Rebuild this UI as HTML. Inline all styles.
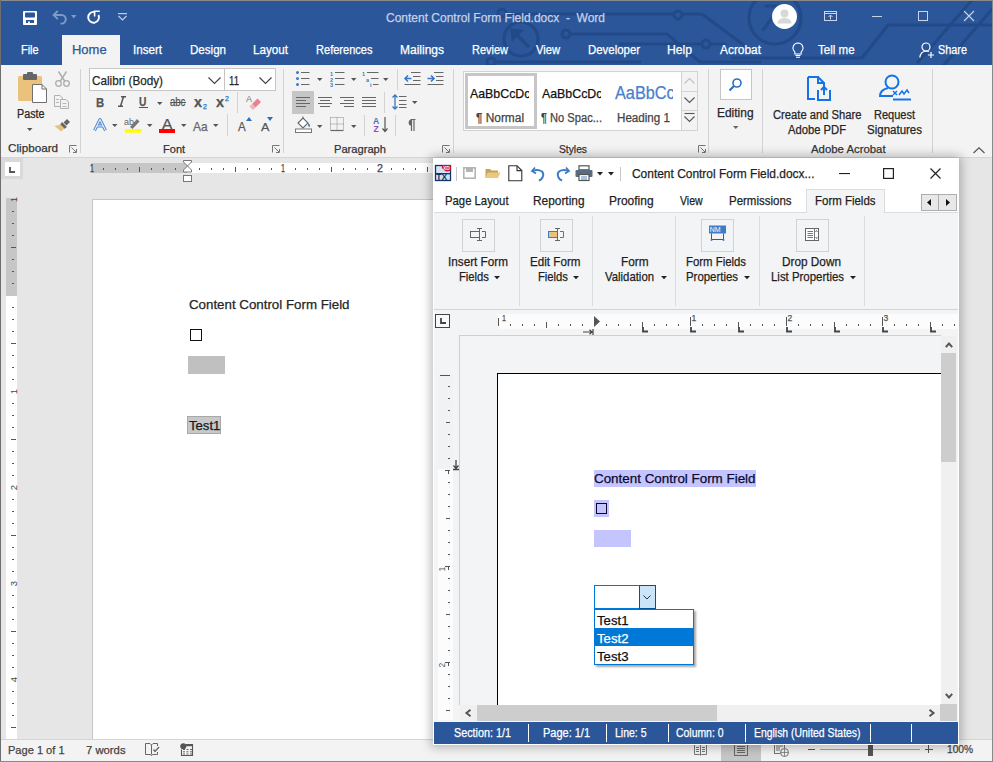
<!DOCTYPE html>
<html><head><meta charset="utf-8">
<style>
*{box-sizing:border-box;margin:0;padding:0}
html,body{width:993px;height:762px;overflow:hidden;background:#e6e6e6;font-family:"Liberation Sans",sans-serif;position:relative}
.a{position:absolute}
.t{position:absolute;white-space:nowrap;line-height:1;transform-origin:0 0;-webkit-text-stroke:0.25px currentColor}
svg.a{overflow:visible}

</style></head><body>
<div class="a" style="left:0px;top:0px;width:993px;height:762px;background:#e6e6e6"></div>
<div class="a" style="left:0px;top:0px;width:993px;height:65px;background:#2b579a"></div>
<svg class="a" style="left:0px;top:0px;clip-path:inset(0 0 0 0)" width="993" height="65" viewBox="0 0 993 65">
<g fill="none" stroke="#224a88" stroke-width="3.2" stroke-linecap="round" stroke-linejoin="round">
<circle cx="521" cy="39" r="17"/>
<path d="M516 34 L528 46" stroke-width="3.5"/></g><g fill="#224a88"><path d="M510 28 L524 30 L512 42Z"/></g><g fill="none" stroke="#224a88" stroke-width="3.2" stroke-linecap="round" stroke-linejoin="round">
<path d="M566 34 H667 L700 62 H760"/>
<path d="M502 14 H702 L745 46"/>
<path d="M620 44 H725"/><path d="M495 62 H640"/>
<circle cx="775" cy="18" r="26"/>
<path d="M763 30 L778 10 M766 6 H778 V18" stroke-width="3"/>
<path d="M732 58 H862 L888 25 H993"/>
<path d="M972 0 L918 62"/>
<path d="M993 8 L943 66"/>
</g>
<g fill="#2b579a" stroke="#224a88" stroke-width="3">
<circle cx="566" cy="34" r="4"/><circle cx="502" cy="13" r="4"/><circle cx="491" cy="62" r="4"/><circle cx="678" cy="15" r="4"/><circle cx="706" cy="44" r="4"/>
</g>
</svg>
<div class="a" style="left:0px;top:0px;width:993px;height:1px;background:#8a8a8a"></div>
<div class="a" style="left:0px;top:0px;width:1px;height:762px;background:#6e6e6e"></div>
<div class="a" style="left:992px;top:0px;width:1px;height:762px;background:#8a8a8a"></div>
<div class="a" style="left:0px;top:761px;width:993px;height:1px;background:#8a8a8a"></div>
<svg class="a" style="left:23px;top:11px;" width="14" height="14" viewBox="0 0 14 14"><rect x="0" y="0" width="14" height="14" rx="0.8" fill="#fff"/><rect x="2" y="1.5" width="10" height="5" rx="0.8" fill="#2b579a"/><rect x="3" y="9" width="8" height="3" fill="#2b579a"/><rect x="5" y="10.5" width="2" height="1.5" fill="#fff"/></svg>
<svg class="a" style="left:52px;top:10px;" width="15" height="15" viewBox="0 0 15 15"><path d="M1.5 5 H9.5 A4.3 4.3 0 0 1 9.5 13.6 H8.5" fill="none" stroke="#7f9cc6" stroke-width="1.9"/><path d="M5.8 0.8 L1.6 5 L5.8 9.2" fill="none" stroke="#7f9cc6" stroke-width="1.9"/></svg>
<svg class="a" style="left:71px;top:15px;" width="6" height="4" viewBox="0 0 6 4"><path d="M0 0 H5.5 L2.75 3.5Z" fill="#7f9cc6"/></svg>
<svg class="a" style="left:86px;top:10px;" width="15" height="15" viewBox="0 0 15 15"><path d="M8.54 1.98 A5.4 5.4 0 1 0 12.49 5.02" fill="none" stroke="#fff" stroke-width="1.9"/><path d="M8.6 6.5 V1.3 H13.8" fill="none" stroke="#fff" stroke-width="1.6"/></svg>
<svg class="a" style="left:118px;top:13px;" width="9" height="8" viewBox="0 0 9 8"><path d="M0 0.6 H9" stroke="#c0cde2" stroke-width="1.2"/><path d="M0.5 3 L4.5 7 L8.5 3" fill="none" stroke="#c0cde2" stroke-width="1.2"/></svg>
<div id="t7f2c9f3855" class="t" style="left:385.50px;top:11.15px;font-size:13px;color:#c6d2e8;transform:scaleX(0.9223);">Content Control Form Field.docx&nbsp; -&nbsp; Word</div>
<svg class="a" style="left:772px;top:4px;" width="25" height="25" viewBox="0 0 25 25"><circle cx="12.5" cy="12.5" r="12.5" fill="#fff"/><circle cx="12.5" cy="9.5" r="4" fill="#d8d8d8"/><path d="M5.5 19.5 Q6 14 12.5 14 Q19 14 19.5 19.5Z" fill="#d8d8d8"/></svg>
<svg class="a" style="left:824px;top:11px;" width="13" height="10" viewBox="0 0 13 10"><rect x="0.5" y="0.5" width="12" height="9" fill="none" stroke="#c8d4ea" stroke-width="1"/><path d="M0.5 2.5 H12.5" stroke="#c8d4ea"/><path d="M6.5 8.5 V4 M4.5 6 L6.5 4 L8.5 6" fill="none" stroke="#c8d4ea"/></svg>
<svg class="a" style="left:872px;top:16px;" width="10" height="1" viewBox="0 0 10 1"><rect x="0" y="0" width="10" height="1" fill="#c8d4ea"/></svg>
<svg class="a" style="left:918px;top:11px;" width="10" height="10" viewBox="0 0 10 10"><rect x="0.5" y="0.5" width="9" height="9" fill="none" stroke="#c8d4ea"/></svg>
<svg class="a" style="left:964px;top:11px;" width="10" height="10" viewBox="0 0 10 10"><path d="M0 0 L10 10 M10 0 L0 10" stroke="#c8d4ea" stroke-width="1.1"/></svg>
<div class="a" style="left:62px;top:35px;width:58px;height:30px;background:#f3f3f3"></div>
<div id="tbbc15a213" class="t" style="left:21.46px;top:43.84px;font-size:12.3px;color:#ffffff;transform:scaleX(0.8895);">File</div>
<div id="t8aadae1340" class="t" style="left:133.20px;top:43.84px;font-size:12.3px;color:#ffffff;transform:scaleX(0.9460);">Insert</div>
<div id="t11355f1898" class="t" style="left:189.96px;top:43.84px;font-size:12.3px;color:#ffffff;transform:scaleX(0.9420);">Design</div>
<div id="te29b2f2530" class="t" style="left:253.00px;top:43.84px;font-size:12.3px;color:#ffffff;transform:scaleX(0.9496);">Layout</div>
<div id="t22053e3162" class="t" style="left:316.04px;top:43.84px;font-size:12.3px;color:#ffffff;transform:scaleX(0.8989);">References</div>
<div id="tc004a34000" class="t" style="left:400.00px;top:43.84px;font-size:12.3px;color:#ffffff;transform:scaleX(0.9763);">Mailings</div>
<div id="tdc41694720" class="t" style="left:472.00px;top:43.84px;font-size:12.3px;color:#ffffff;transform:scaleX(0.8945);">Review</div>
<div id="ta64dcd5360" class="t" style="left:536.00px;top:43.84px;font-size:12.3px;color:#ffffff;transform:scaleX(0.9093);">View</div>
<div id="tc43ec65880" class="t" style="left:588.00px;top:43.84px;font-size:12.3px;color:#ffffff;transform:scaleX(0.9285);">Developer</div>
<div id="t62c74b6680" class="t" style="left:667.20px;top:43.84px;font-size:12.3px;color:#ffffff;transform:scaleX(0.9902);">Help</div>
<div id="t0386777200" class="t" style="left:720.00px;top:43.84px;font-size:12.3px;color:#ffffff;transform:scaleX(0.9682);">Acrobat</div>
<div id="t0ba36f8175" class="t" style="left:817.50px;top:43.84px;font-size:12.3px;color:#ffffff;transform:scaleX(0.9383);">Tell me</div>
<div id="t4261a99384" class="t" style="left:938.08px;top:43.84px;font-size:12.3px;color:#ffffff;transform:scaleX(0.8852);">Share</div>
<div id="t6b4dc1738" class="t" style="left:72.36px;top:43.84px;font-size:12.3px;color:#2b579a;transform:scaleX(1.0545);">Home</div>
<svg class="a" style="left:792px;top:42px;" width="12" height="16" viewBox="0 0 12 16"><path d="M6 1 A5 5 0 0 1 9.2 9.8 V12 H2.8 V9.8 A5 5 0 0 1 6 1Z" fill="none" stroke="#fff" stroke-width="1.1"/><path d="M3.5 13.5 H8.5 M4 15.3 H8" stroke="#fff" stroke-width="1.1"/></svg>
<svg class="a" style="left:919px;top:42px;" width="16" height="16" viewBox="0 0 16 16"><circle cx="7" cy="5" r="4" fill="none" stroke="#fff" stroke-width="1.2"/><path d="M0.8 15.5 Q1.5 9.5 7 9 Q9 9 10 9.6" fill="none" stroke="#fff" stroke-width="1.2"/><path d="M12 10 V16 M9 13 H15" stroke="#fff" stroke-width="1.2"/></svg>
<div class="a" style="left:1px;top:65px;width:991px;height:92px;background:#f3f3f3"></div>
<div class="a" style="left:1px;top:157px;width:991px;height:1px;background:#d5d5d5"></div>
<div class="a" style="left:80px;top:69px;width:1px;height:84px;background:#d2d2d2"></div>
<div class="a" style="left:283px;top:69px;width:1px;height:84px;background:#d2d2d2"></div>
<div class="a" style="left:453px;top:69px;width:1px;height:84px;background:#d2d2d2"></div>
<div class="a" style="left:708px;top:69px;width:1px;height:84px;background:#d2d2d2"></div>
<div class="a" style="left:762px;top:69px;width:1px;height:84px;background:#d2d2d2"></div>
<div class="a" style="left:932px;top:69px;width:1px;height:84px;background:#d2d2d2"></div>
<div id="t0d511577" class="t" style="left:7.54px;top:141.64px;font-size:11.6px;color:#333;transform:scaleX(1.0083);">Clipboard</div>
<div id="t20636a1625" class="t" style="left:162.50px;top:142.84px;font-size:11.6px;color:#333;transform:scaleX(0.9520);">Font</div>
<div id="ta837973343" class="t" style="left:334.46px;top:143.04px;font-size:11.6px;color:#333;transform:scaleX(0.9606);">Paragraph</div>
<div id="tdd20915588" class="t" style="left:558.96px;top:143.34px;font-size:11.6px;color:#333;transform:scaleX(0.8867);">Styles</div>
<div id="tc38e408092" class="t" style="left:810.64px;top:143.14px;font-size:11.6px;color:#333;transform:scaleX(0.9802);">Adobe Acrobat</div>
<svg class="a" style="left:69px;top:145px;" width="8" height="8" viewBox="0 0 8 8"><path d="M0.5 7.5 V0.5 H7.5" fill="none" stroke="#777" stroke-width="1"/><path d="M2.5 2.5 L7 7 M4 7.5 H7.5 V4" fill="none" stroke="#777" stroke-width="1"/></svg>
<svg class="a" style="left:272px;top:145px;" width="8" height="8" viewBox="0 0 8 8"><path d="M0.5 7.5 V0.5 H7.5" fill="none" stroke="#777" stroke-width="1"/><path d="M2.5 2.5 L7 7 M4 7.5 H7.5 V4" fill="none" stroke="#777" stroke-width="1"/></svg>
<svg class="a" style="left:442px;top:145px;" width="8" height="8" viewBox="0 0 8 8"><path d="M0.5 7.5 V0.5 H7.5" fill="none" stroke="#777" stroke-width="1"/><path d="M2.5 2.5 L7 7 M4 7.5 H7.5 V4" fill="none" stroke="#777" stroke-width="1"/></svg>
<svg class="a" style="left:698px;top:145px;" width="8" height="8" viewBox="0 0 8 8"><path d="M0.5 7.5 V0.5 H7.5" fill="none" stroke="#777" stroke-width="1"/><path d="M2.5 2.5 L7 7 M4 7.5 H7.5 V4" fill="none" stroke="#777" stroke-width="1"/></svg>
<svg class="a" style="left:17px;top:72px;" width="31" height="32" viewBox="0 0 31 32">
<rect x="1" y="4" width="24" height="25" rx="1.5" fill="#eac27c"/>
<rect x="6" y="2" width="14" height="6" rx="1" fill="#666"/>
<rect x="10" y="0" width="6" height="4" rx="1" fill="#666"/>
<path d="M15.5 12.5 H25 L29.5 17 V30.5 H15.5Z" fill="#fff" stroke="#707070" stroke-width="1"/>
<path d="M25 12.5 V17 H29.5" fill="none" stroke="#707070" stroke-width="1"/>
</svg>
<div id="te72ed9166" class="t" style="left:16.92px;top:107.60px;font-size:12px;color:#262626;transform:scaleX(0.8978);">Paste</div>
<svg class="a" style="left:27px;top:128px;" width="6" height="3" viewBox="0 0 6 3"><path d="M0 0 H5.5 L2.75 3Z" fill="#555"/></svg>
<svg class="a" style="left:55px;top:71px;" width="15" height="16" viewBox="0 0 15 16"><path d="M3.5 0.5 L10 10.5 M11.5 0.5 L5 10.5" stroke="#adadad" stroke-width="1.4" fill="none"/><circle cx="3.5" cy="12.5" r="2.8" fill="none" stroke="#adadad" stroke-width="1.3"/><circle cx="11.5" cy="12.5" r="2.8" fill="none" stroke="#adadad" stroke-width="1.3"/></svg>
<svg class="a" style="left:54px;top:95px;" width="16" height="14" viewBox="0 0 16 14"><path d="M0.5 0.5 H6 L8.5 3 V11.5 H0.5Z" fill="#f3f3f3" stroke="#b0b0b0"/><path d="M6.5 4.5 H12 L14.5 7 V13.5 H6.5Z" fill="#f3f3f3" stroke="#b0b0b0"/><path d="M2 4.5 H5 M2 7.5 H5 M8.5 8.5 H12.5 M8.5 11.5 H12.5" stroke="#b8b8b8"/></svg>
<svg class="a" style="left:54px;top:118px;" width="17" height="14" viewBox="0 0 17 14"><path d="M9.5 4.5 L13 1 L16 4 L12.5 7.5Z" fill="#666"/><path d="M8 4 L13 9 L10 11 L6 7Z" fill="#666"/><path d="M6.5 6.5 L10.5 10.5 L7 13.5 L0.5 8 Z" fill="#eac27c"/></svg>
<div class="a" style="left:89px;top:68px;width:136px;height:23px;background:#fff;border:1px solid #c6c6c6"></div>
<div class="a" style="left:224px;top:68px;width:52px;height:23px;background:#fff;border:1px solid #c6c6c6"></div>
<div id="t584dda923" class="t" style="left:92.46px;top:73.55px;font-size:13px;color:#262626;transform:scaleX(0.9018);">Calibri (Body)</div>
<div id="tdb12542286" class="t" style="left:228.92px;top:73.55px;font-size:13px;color:#262626;transform:scaleX(0.7407);">11</div>
<svg class="a" style="left:208px;top:77px;" width="13" height="7" viewBox="0 0 13 7"><path d="M0.5 0.5 L6.5 6.5 L12.5 0.5" fill="none" stroke="#444" stroke-width="1.2"/></svg>
<svg class="a" style="left:259px;top:77px;" width="13" height="7" viewBox="0 0 13 7"><path d="M0.5 0.5 L6.5 6.5 L12.5 0.5" fill="none" stroke="#444" stroke-width="1.2"/></svg>
<div id="td25938955" class="t" style="left:95.50px;top:95.83px;font-size:13.5px;color:#555555;transform:scaleX(0.8378);font-weight:bold">B</div>
<svg class="a" style="left:118px;top:96px;" width="8" height="11" viewBox="0 0 8 11"><path d="M3 0.8 H8 M0 10.2 H5 M5.5 0.8 L2.5 10.2" fill="none" stroke="#555" stroke-width="1.5"/></svg>
<div id="t57b72a1388" class="t" style="left:138.96px;top:94.95px;font-size:13px;color:#555555;transform:scaleX(0.7860);font-weight:bold">U</div>
<div class="a" style="left:138.8px;top:107px;width:9px;height:1.3px;background:#555555"></div>
<svg class="a" style="left:157px;top:102px;" width="6" height="3" viewBox="0 0 6 3"><path d="M0 0 H5.5 L2.75 3Z" fill="#555"/></svg>
<div id="t6082021700" class="t" style="left:170.00px;top:96.30px;font-size:12px;color:#555555;transform:scaleX(0.7926);">abc</div>
<div class="a" style="left:170px;top:101.5px;width:16px;height:1.2px;background:#555555"></div>
<div id="t365f9b1940" class="t" style="left:194.00px;top:94.67px;font-size:14.5px;color:#555555;transform:scaleX(1.0000);font-weight:bold">x</div>
<div id="t5bd4202030" class="t" style="left:203.00px;top:103.05px;font-size:7px;color:#2b6fc0;">2</div>
<div id="t365f9b2160" class="t" style="left:216.00px;top:94.67px;font-size:14.5px;color:#555555;transform:scaleX(1.0000);font-weight:bold">x</div>
<div id="t5bd4202250" class="t" style="left:225.00px;top:95.25px;font-size:7px;color:#2b6fc0;">2</div>
<div class="a" style="left:237px;top:92px;width:1px;height:21px;background:#d2d2d2"></div>
<svg class="a" style="left:246px;top:94px;" width="16" height="16" viewBox="0 0 16 16"><text x="0" y="8" font-size="9" fill="#777" font-family="Liberation Sans">A</text><path d="M6 10 L11.5 4.5 L15 8 L9.5 13.5 Z" fill="#e9818f"/><path d="M3.5 12.5 L6 10 L9.5 13.5 L7 16 Z" fill="#f3b0b8"/></svg>
<svg class="a" style="left:93px;top:118px;" width="14" height="14" viewBox="0 0 14 14"><path d="M1.5 12.5 L7 1.5 L12.5 12.5 M4 8 H10" fill="none" stroke="#4a86d0" stroke-width="3" stroke-linejoin="round"/><path d="M1.5 12.5 L7 1.5 L12.5 12.5 M4 8 H10" fill="none" stroke="#eef4fb" stroke-width="1.1" stroke-linejoin="round"/></svg>
<svg class="a" style="left:111.5px;top:124px;" width="6" height="3" viewBox="0 0 6 3"><path d="M0 0 H5.5 L2.75 3Z" fill="#555"/></svg>
<svg class="a" style="left:124px;top:117px;" width="18" height="16" viewBox="0 0 18 16"><text x="0" y="8" font-size="9" fill="#666" font-family="Liberation Sans">ab</text><path d="M6 10 L13 2 L15.5 4.5 L8.5 12Z" fill="#777"/><rect x="0.8" y="12" width="16.5" height="3.7" fill="#ffff00"/></svg>
<svg class="a" style="left:147px;top:124px;" width="6" height="3" viewBox="0 0 6 3"><path d="M0 0 H5.5 L2.75 3Z" fill="#555"/></svg>
<div id="t9d4f6b1595" class="t" style="left:161.90px;top:116.60px;font-size:14px;color:#555;transform:scaleX(1.1095);">A</div>
<div class="a" style="left:159px;top:129px;width:16px;height:3.7px;background:#ff0000"></div>
<svg class="a" style="left:181px;top:124px;" width="6" height="3" viewBox="0 0 6 3"><path d="M0 0 H5.5 L2.75 3Z" fill="#555"/></svg>
<div id="ta1ca191930" class="t" style="left:193.00px;top:119.53px;font-size:13.5px;color:#666;transform:scaleX(0.8852);">Aa</div>
<svg class="a" style="left:213px;top:124px;" width="6" height="3" viewBox="0 0 6 3"><path d="M0 0 H5.5 L2.75 3Z" fill="#555"/></svg>
<div class="a" style="left:227px;top:114px;width:1px;height:22px;background:#d2d2d2"></div>
<div id="t3366852380" class="t" style="left:238.00px;top:119.72px;font-size:13.5px;color:#555;transform:scaleX(0.8532);">A</div>
<svg class="a" style="left:246px;top:117px;" width="6" height="4" viewBox="0 0 6 4"><path d="M0 4 L3 0 L6 4Z" fill="#2b6fc0"/></svg>
<div id="ta53d912608" class="t" style="left:260.96px;top:122.42px;font-size:11.5px;color:#555;transform:scaleX(1.0995);">A</div>
<svg class="a" style="left:267px;top:117px;" width="6" height="4" viewBox="0 0 6 4"><path d="M0 0 L3 4 L6 0Z" fill="#2b6fc0"/></svg>
<svg class="a" style="left:296px;top:71px;" width="14" height="15" viewBox="0 0 14 15"><circle cx="1.5" cy="1.5" r="1.5" fill="#3b78c2"/><circle cx="1.5" cy="7.5" r="1.5" fill="#3b78c2"/><circle cx="1.5" cy="13.5" r="1.5" fill="#3b78c2"/><path d="M5 1.5 H13.5 M5 7.5 H13.5 M5 13.5 H13.5" stroke="#666" stroke-width="1"/></svg>
<svg class="a" style="left:317px;top:78px;" width="6" height="3" viewBox="0 0 6 3"><path d="M0 0 H5.5 L2.75 3Z" fill="#555"/></svg>
<svg class="a" style="left:330px;top:71px;" width="15" height="15" viewBox="0 0 15 15"><text x="0" y="4.5" font-size="5.5" font-weight="bold" fill="#3b78c2" font-family="Liberation Sans">1</text><text x="0" y="10.5" font-size="5.5" font-weight="bold" fill="#3b78c2" font-family="Liberation Sans">2</text><text x="0" y="16" font-size="5.5" font-weight="bold" fill="#3b78c2" font-family="Liberation Sans">3</text><path d="M5 1.5 H14.5 M5 7.5 H14.5 M5 13.5 H14.5" stroke="#666" stroke-width="1"/></svg>
<svg class="a" style="left:351px;top:78px;" width="6" height="3" viewBox="0 0 6 3"><path d="M0 0 H5.5 L2.75 3Z" fill="#555"/></svg>
<svg class="a" style="left:362px;top:71px;" width="17" height="15" viewBox="0 0 17 15"><text x="0" y="4.5" font-size="5.5" font-weight="bold" fill="#3b78c2" font-family="Liberation Sans">1</text><text x="4" y="10.5" font-size="5.5" font-weight="bold" fill="#3b78c2" font-family="Liberation Sans">a</text><text x="8" y="16" font-size="5.5" font-weight="bold" fill="#3b78c2" font-family="Liberation Sans">i</text><path d="M5 1.5 H16.5 M9 7.5 H16.5 M11 13.5 H16.5" stroke="#666" stroke-width="1"/></svg>
<svg class="a" style="left:383px;top:78px;" width="6" height="3" viewBox="0 0 6 3"><path d="M0 0 H5.5 L2.75 3Z" fill="#555"/></svg>
<div class="a" style="left:397px;top:69px;width:1px;height:21px;background:#d2d2d2"></div>
<svg class="a" style="left:404px;top:72px;" width="17" height="14" viewBox="0 0 17 14"><path d="M7 0.5 H16.5 M9 4.5 H16.5 M9 8.5 H16.5 M0.5 12.5 H16.5" stroke="#666" stroke-width="1"/><path d="M1 6.5 H7.5 M4 3.5 L1 6.5 L4 9.5" fill="none" stroke="#3b78c2" stroke-width="1.6"/></svg>
<svg class="a" style="left:427px;top:72px;" width="17" height="14" viewBox="0 0 17 14"><path d="M7 0.5 H16.5 M9 4.5 H16.5 M9 8.5 H16.5 M0.5 12.5 H16.5" stroke="#666" stroke-width="1"/><path d="M0.5 6.5 H7 M4 3.5 L7 6.5 L4 9.5" fill="none" stroke="#3b78c2" stroke-width="1.6"/></svg>
<div class="a" style="left:292px;top:91px;width:22px;height:23px;background:#c6c6c6"></div>
<svg class="a" style="left:296px;top:97px;" width="15" height="11" viewBox="0 0 15 11"><path d="M0 0.5 H14" stroke="#666" stroke-width="1"/><path d="M0 3.5 H10" stroke="#666" stroke-width="1"/><path d="M0 6.5 H14" stroke="#666" stroke-width="1"/><path d="M0 9.5 H10" stroke="#666" stroke-width="1"/></svg>
<svg class="a" style="left:318px;top:97px;" width="15" height="11" viewBox="0 0 15 11"><path d="M0 0.5 H14" stroke="#666" stroke-width="1"/><path d="M2 3.5 H12" stroke="#666" stroke-width="1"/><path d="M0 6.5 H14" stroke="#666" stroke-width="1"/><path d="M2 9.5 H12" stroke="#666" stroke-width="1"/></svg>
<svg class="a" style="left:340px;top:97px;" width="15" height="11" viewBox="0 0 15 11"><path d="M0 0.5 H14" stroke="#666" stroke-width="1"/><path d="M4 3.5 H14" stroke="#666" stroke-width="1"/><path d="M0 6.5 H14" stroke="#666" stroke-width="1"/><path d="M4 9.5 H14" stroke="#666" stroke-width="1"/></svg>
<svg class="a" style="left:362px;top:97px;" width="15" height="11" viewBox="0 0 15 11"><path d="M0 0.5 H14" stroke="#666" stroke-width="1"/><path d="M0 3.5 H14" stroke="#666" stroke-width="1"/><path d="M0 6.5 H14" stroke="#666" stroke-width="1"/><path d="M0 9.5 H14" stroke="#666" stroke-width="1"/></svg>
<div class="a" style="left:384px;top:92px;width:1px;height:21px;background:#d2d2d2"></div>
<svg class="a" style="left:392px;top:94px;" width="15" height="16" viewBox="0 0 15 16"><path d="M7 2.5 H14.5 M7 6.5 H14.5 M7 10.5 H14.5 M7 13.5 H14.5" stroke="#666" stroke-width="1"/><path d="M3 1 V15 M0.5 3.5 L3 1 L5.5 3.5 M0.5 12.5 L3 15 L5.5 12.5" fill="none" stroke="#3b78c2" stroke-width="1.3"/></svg>
<svg class="a" style="left:412px;top:101px;" width="6" height="3" viewBox="0 0 6 3"><path d="M0 0 H5.5 L2.75 3Z" fill="#555"/></svg>
<svg class="a" style="left:295px;top:116px;" width="17" height="17" viewBox="0 0 17 17"><path d="M3 7 L8 2 L13 7 L8 12Z" fill="#fff" stroke="#666" stroke-width="1.1"/><path d="M8 2 V0.5" stroke="#666"/><path d="M13 7 Q16 9 14.5 11 Q12.5 10 13 7Z" fill="#3b78c2"/><rect x="0.5" y="13" width="16" height="3.5" fill="#fff" stroke="#777" stroke-width="1"/></svg>
<svg class="a" style="left:317px;top:125px;" width="6" height="3" viewBox="0 0 6 3"><path d="M0 0 H5.5 L2.75 3Z" fill="#555"/></svg>
<svg class="a" style="left:330px;top:117px;" width="14" height="14" viewBox="0 0 14 14"><path d="M0.5 13.5 H13.5" stroke="#666" stroke-width="1.2"/><path d="M0.5 0.5 H13.5 V13 M0.5 0.5 V13 M7 0.5 V13 M0.5 7 H13.5" stroke="#888" stroke-width="1" stroke-dasharray="1 1" fill="none"/></svg>
<svg class="a" style="left:351px;top:125px;" width="6" height="3" viewBox="0 0 6 3"><path d="M0 0 H5.5 L2.75 3Z" fill="#555"/></svg>
<div class="a" style="left:364px;top:115px;width:1px;height:21px;background:#d2d2d2"></div>
<svg class="a" style="left:373px;top:116px;" width="15" height="17" viewBox="0 0 15 17"><text x="0" y="7.5" font-size="8.5" fill="#3b78c2" font-family="Liberation Sans" font-weight="bold">A</text><text x="0.5" y="16" font-size="8.5" fill="#8a4fc4" font-family="Liberation Sans" font-weight="bold">Z</text><path d="M12 1 V15 M9.5 12.5 L12 15.5 L14.5 12.5" fill="none" stroke="#555" stroke-width="1.2"/></svg>
<div class="a" style="left:395px;top:115px;width:1px;height:21px;background:#d2d2d2"></div>
<svg class="a" style="left:406px;top:119px;" width="10" height="12" viewBox="0 0 10 12"><path d="M4.5 0.5 H9.5 M5.5 0.5 V12 M8 0.5 V12" stroke="#666" stroke-width="1.2" fill="none"/><path d="M5 0.5 A3 3.2 0 0 0 5 6.8Z" fill="#666"/></svg>
<div class="a" style="left:463px;top:71px;width:235px;height:60px;background:#fff;border:1px solid #d2d2d2"></div>
<div class="a" style="left:465px;top:73px;width:72px;height:56px;border:3px solid #c6c6c6"></div>
<div class="a" style="left:681px;top:71px;width:17px;height:60px;background:#f3f3f3;border:1px solid #d2d2d2"></div>
<div class="a" style="left:681px;top:91px;width:17px;height:1px;background:#d2d2d2"></div>
<div class="a" style="left:681px;top:110px;width:17px;height:1px;background:#d2d2d2"></div>
<svg class="a" style="left:684px;top:78px;" width="11" height="6" viewBox="0 0 11 6"><path d="M0.5 5.5 L5.5 0.5 L10.5 5.5" fill="none" stroke="#c0c0c0" stroke-width="1.1"/></svg>
<svg class="a" style="left:684px;top:97px;" width="11" height="6" viewBox="0 0 11 6"><path d="M0.5 0.5 L5.5 5.5 L10.5 0.5" fill="none" stroke="#555" stroke-width="1.1"/></svg>
<svg class="a" style="left:684px;top:113px;" width="11" height="10" viewBox="0 0 11 10"><path d="M0.5 0.5 H10.5" stroke="#555" stroke-width="1.1"/><path d="M0.5 3.5 L5.5 8.5 L10.5 3.5" fill="none" stroke="#555" stroke-width="1.1"/></svg>
<div class="a" style="left:470px;top:80px;width:59px;height:25px;overflow:hidden"><div id="t6f57ef4" class="t" style="left:0.40px;top:7.15px;font-size:13px;color:#111;transform:scaleX(0.95)">AaBbCcDc</div></div>
<div class="a" style="left:542px;top:80px;width:59px;height:25px;overflow:hidden"><div id="t6f57ef4" class="t" style="left:0.40px;top:7.15px;font-size:13px;color:#111;transform:scaleX(0.95)">AaBbCcDc</div></div>
<div class="a" style="left:614px;top:80px;width:59px;height:25px;overflow:hidden"><div id="te061d55" class="t" style="left:0.50px;top:4.93px;font-size:17.5px;color:#4a7fcb;transform:scaleX(0.93)">AaBbCcDc</div></div>
<div id="tcf5f604758" class="t" style="left:475.96px;top:112.00px;font-size:12px;color:#444;transform:scaleX(0.9914);">&para; Normal</div>
<div id="t0522e15410" class="t" style="left:541.00px;top:112.00px;font-size:12px;color:#444;transform:scaleX(0.9269);">&para; No Spac...</div>
<div id="tfbc1f56172" class="t" style="left:617.04px;top:112.00px;font-size:12px;color:#444;transform:scaleX(0.9686);">Heading 1</div>
<div class="a" style="left:720px;top:69px;width:32px;height:31px;background:#fff;border:1px solid #c6c6c6"></div>
<svg class="a" style="left:728px;top:78px;" width="15" height="13" viewBox="0 0 15 13"><circle cx="9" cy="5" r="4" fill="none" stroke="#2b6fc0" stroke-width="1.6"/><path d="M6 8 L1.5 12.5" stroke="#2b6fc0" stroke-width="2.2"/></svg>
<div id="t75d3b07170" class="t" style="left:717.00px;top:106.50px;font-size:12px;color:#262626;transform:scaleX(0.9955);">Editing</div>
<svg class="a" style="left:733px;top:126px;" width="6" height="3" viewBox="0 0 6 3"><path d="M0 0 H5.5 L2.75 3Z" fill="#666"/></svg>
<svg class="a" style="left:807px;top:76px;" width="25" height="26" viewBox="0 0 25 26"><path d="M1 1 H11 L17 7 V11 M1 1 V23 H8" fill="none" stroke="#1473e6" stroke-width="2"/><path d="M11 1 V7 H17" fill="none" stroke="#1473e6" stroke-width="2"/><path d="M11 14 V24 H23 V14" fill="none" stroke="#1473e6" stroke-width="2"/><path d="M17 19 V11 M14 14 L17 11 L20 14" fill="none" stroke="#1473e6" stroke-width="2"/></svg>
<div id="t4fe8137732" class="t" style="left:773.04px;top:108.60px;font-size:12px;color:#262626;transform:scaleX(0.9344);">Create and Share</div>
<div id="t5de8277880" class="t" style="left:788.00px;top:124.20px;font-size:12px;color:#262626;transform:scaleX(0.9353);">Adobe PDF</div>
<svg class="a" style="left:879px;top:74px;" width="33" height="27" viewBox="0 0 33 27"><circle cx="13" cy="8" r="6.5" fill="none" stroke="#1473e6" stroke-width="2"/><path d="M9 14 Q1 16 1 22 H14" fill="none" stroke="#1473e6" stroke-width="2"/><path d="M14 17 L18 21 M18 17 L14 21" stroke="#1473e6" stroke-width="1.4"/><path d="M20 21 L23 17 L25 20 L28 16 L30 19" fill="none" stroke="#1473e6" stroke-width="1.5"/><path d="M14 25.5 H32" stroke="#1473e6" stroke-width="2"/></svg>
<div id="t47f6238740" class="t" style="left:874.00px;top:108.60px;font-size:12px;color:#262626;transform:scaleX(0.9177);">Request</div>
<div id="t2f61e88667" class="t" style="left:866.54px;top:124.20px;font-size:12px;color:#262626;transform:scaleX(0.9590);">Signatures</div>
<svg class="a" style="left:973px;top:147px;" width="12" height="7" viewBox="0 0 12 7"><path d="M0.5 6 L6 0.8 L11.5 6" fill="none" stroke="#555" stroke-width="1.2"/></svg>
<div class="a" style="left:1px;top:158px;width:22px;height:21px;background:#d9d9d9"></div>
<div class="a" style="left:5px;top:162px;width:15px;height:14px;background:#fff"></div>
<svg class="a" style="left:9px;top:167px;" width="6" height="6" viewBox="0 0 6 6"><path d="M1 0 V5 H6" fill="none" stroke="#555" stroke-width="1.8"/></svg>
<div class="a" style="left:91px;top:163px;width:342px;height:10px;background:#fff"></div>
<div class="a" style="left:91px;top:163px;width:96px;height:10px;background:#c6c6c6"></div>
<svg class="a" style="left:91px;top:163px;" width="342" height="10" viewBox="0 0 342 10"><rect x="12" y="5" width="1" height="2" fill="#555"/><rect x="24" y="5" width="1" height="2" fill="#555"/><rect x="36" y="5" width="1" height="2" fill="#555"/><rect x="48" y="4" width="1" height="5" fill="#555"/><rect x="60" y="5" width="1" height="2" fill="#555"/><rect x="72" y="5" width="1" height="2" fill="#555"/><rect x="84" y="5" width="1" height="2" fill="#555"/><rect x="108" y="5" width="1" height="2" fill="#555"/><rect x="120" y="5" width="1" height="2" fill="#555"/><rect x="132" y="5" width="1" height="2" fill="#555"/><rect x="144" y="4" width="1" height="5" fill="#555"/><rect x="156" y="5" width="1" height="2" fill="#555"/><rect x="168" y="5" width="1" height="2" fill="#555"/><rect x="180" y="5" width="1" height="2" fill="#555"/><rect x="204" y="5" width="1" height="2" fill="#555"/><rect x="216" y="5" width="1" height="2" fill="#555"/><rect x="228" y="5" width="1" height="2" fill="#555"/><rect x="240" y="4" width="1" height="5" fill="#555"/><rect x="252" y="5" width="1" height="2" fill="#555"/><rect x="264" y="5" width="1" height="2" fill="#555"/><rect x="276" y="5" width="1" height="2" fill="#555"/><rect x="300" y="5" width="1" height="2" fill="#555"/><rect x="312" y="5" width="1" height="2" fill="#555"/><rect x="324" y="5" width="1" height="2" fill="#555"/><rect x="336" y="4" width="1" height="5" fill="#555"/></svg>
<div id="tc18967898" class="t" style="left:89.80px;top:163.07px;font-size:10.5px;color:#444;transform:scaleX(0.6845);">1</div>
<div id="tc189672805" class="t" style="left:280.50px;top:163.07px;font-size:10.5px;color:#444;transform:scaleX(0.6845);">1</div>
<div id="t21cd0c3765" class="t" style="left:376.50px;top:163.07px;font-size:10.5px;color:#444;transform:scaleX(1.0267);">2</div>
<svg class="a" style="left:183px;top:160px;" width="10" height="22" viewBox="0 0 10 22"><path d="M0.5 0.5 H8.5 V2 L4.5 6 L8.5 10 V12 H0.5 V10 L4.5 6 L0.5 2Z" fill="#fff" stroke="#777" stroke-width="1"/><rect x="0.5" y="15.5" width="8" height="6" fill="#fff" stroke="#777" stroke-width="1"/></svg>
<div class="a" style="left:6px;top:198px;width:11px;height:542px;background:#fff"></div>
<div class="a" style="left:6px;top:198px;width:11px;height:98px;background:#c6c6c6"></div>
<svg class="a" style="left:6px;top:198px;" width="11" height="542" viewBox="0 0 11 542"><rect x="6" y="13" width="2" height="1" fill="#555"/><rect x="6" y="25" width="2" height="1" fill="#555"/><rect x="6" y="37" width="2" height="1" fill="#555"/><rect x="5" y="49" width="5" height="1" fill="#555"/><rect x="6" y="61" width="2" height="1" fill="#555"/><rect x="6" y="73" width="2" height="1" fill="#555"/><rect x="6" y="85" width="2" height="1" fill="#555"/><rect x="6" y="109" width="2" height="1" fill="#555"/><rect x="6" y="121" width="2" height="1" fill="#555"/><rect x="6" y="133" width="2" height="1" fill="#555"/><rect x="5" y="145" width="5" height="1" fill="#555"/><rect x="6" y="157" width="2" height="1" fill="#555"/><rect x="6" y="169" width="2" height="1" fill="#555"/><rect x="6" y="181" width="2" height="1" fill="#555"/><rect x="6" y="205" width="2" height="1" fill="#555"/><rect x="6" y="217" width="2" height="1" fill="#555"/><rect x="6" y="229" width="2" height="1" fill="#555"/><rect x="5" y="241" width="5" height="1" fill="#555"/><rect x="6" y="253" width="2" height="1" fill="#555"/><rect x="6" y="265" width="2" height="1" fill="#555"/><rect x="6" y="277" width="2" height="1" fill="#555"/><rect x="6" y="301" width="2" height="1" fill="#555"/><rect x="6" y="313" width="2" height="1" fill="#555"/><rect x="6" y="325" width="2" height="1" fill="#555"/><rect x="5" y="337" width="5" height="1" fill="#555"/><rect x="6" y="349" width="2" height="1" fill="#555"/><rect x="6" y="361" width="2" height="1" fill="#555"/><rect x="6" y="373" width="2" height="1" fill="#555"/><rect x="6" y="397" width="2" height="1" fill="#555"/><rect x="6" y="409" width="2" height="1" fill="#555"/><rect x="6" y="421" width="2" height="1" fill="#555"/><rect x="5" y="433" width="5" height="1" fill="#555"/><rect x="6" y="445" width="2" height="1" fill="#555"/><rect x="6" y="457" width="2" height="1" fill="#555"/><rect x="6" y="469" width="2" height="1" fill="#555"/><rect x="6" y="493" width="2" height="1" fill="#555"/><rect x="6" y="505" width="2" height="1" fill="#555"/><rect x="6" y="517" width="2" height="1" fill="#555"/><rect x="5" y="529" width="5" height="1" fill="#555"/></svg>
<div class="a" style="left:7.5px;top:193.5px;width:11px;height:11px;font-size:9.5px;line-height:11px;text-align:center;color:#444;transform:rotate(-90deg)">1</div>
<div class="a" style="left:7.5px;top:385.5px;width:11px;height:11px;font-size:9.5px;line-height:11px;text-align:center;color:#444;transform:rotate(-90deg)">1</div>
<div class="a" style="left:7.5px;top:481.5px;width:11px;height:11px;font-size:9.5px;line-height:11px;text-align:center;color:#444;transform:rotate(-90deg)">2</div>
<div class="a" style="left:7.5px;top:577.5px;width:11px;height:11px;font-size:9.5px;line-height:11px;text-align:center;color:#444;transform:rotate(-90deg)">3</div>
<div class="a" style="left:7.5px;top:673.5px;width:11px;height:11px;font-size:9.5px;line-height:11px;text-align:center;color:#444;transform:rotate(-90deg)">4</div>
<div class="a" style="left:92px;top:199px;width:341px;height:541px;background:#fff;border-left:1px solid #c6c6c6;border-top:1px solid #c6c6c6"></div>
<div id="t06d3261887" class="t" style="left:188.54px;top:298.25px;font-size:13px;color:#262626;transform:scaleX(1.0238);">Content Control Form Field</div>
<div class="a" style="left:190px;top:329px;width:11.5px;height:11.5px;border:1.3px solid #111"></div>
<div class="a" style="left:188px;top:356px;width:37px;height:18px;background:#c0c0c0"></div>
<div class="a" style="left:187px;top:416px;width:34px;height:18px;background:#c8c8c8;border:1px solid #a8a8a8"></div>
<div id="t5685a31887" class="t" style="left:188.70px;top:419.05px;font-size:13px;color:#1a1a1a;transform:scaleX(1.0104);">Test1</div>
<div class="a" style="left:1px;top:739px;width:991px;height:22px;background:#f3f3f3;border-top:1px solid #d5d5d5"></div>
<div id="t48fd8380" class="t" style="left:8.00px;top:745.23px;font-size:11.5px;color:#444;transform:scaleX(0.9610);">Page 1 of 1</div>
<div id="t299a35856" class="t" style="left:85.92px;top:745.23px;font-size:11.5px;color:#444;transform:scaleX(0.9815);">7 words</div>
<svg class="a" style="left:145px;top:743px;" width="15" height="14" viewBox="0 0 15 14"><path d="M0.5 0.5 H5 L6.5 2 V11.5 M0.5 0.5 V11.5 H5.5 L6.5 12.8 L7.5 11.5 H12.5 V9" fill="none" stroke="#666" stroke-width="1"/><path d="M6.5 2 L8 0.5 H12.5 V3" fill="none" stroke="#666" stroke-width="1"/><path d="M8.5 6.5 L10 8.5 L14 4" fill="none" stroke="#666" stroke-width="1.3"/></svg>
<svg class="a" style="left:180px;top:743px;" width="14" height="14" viewBox="0 0 14 14"><path d="M1.5 6.5 V12.5 H12.5 V1.5 H6" fill="none" stroke="#555" stroke-width="1.1"/><rect x="6" y="1" width="7" height="2.2" fill="#555"/><path d="M3 6.5 H5 M6.5 6.5 H8.5 M10 6.5 H12 M3 8.8 H5 M6.5 8.8 H8.5 M10 8.8 H12 M3 11 H5 M6.5 11 H8.5 M10 11 H12" stroke="#666" stroke-width="1"/><circle cx="3.3" cy="3.3" r="3" fill="#555"/></svg>
<svg class="a" style="left:694px;top:744px;" width="13" height="12" viewBox="0 0 13 12"><path d="M0.5 0.5 H5.5 L6.5 1.5 L7.5 0.5 H12.5 V10.5 H7.5 L6.5 11.5 L5.5 10.5 H0.5Z" fill="none" stroke="#777"/><path d="M6.5 1.5 V11 M2 3.5 H5 M2 5.5 H5 M2 7.5 H5 M8 3.5 H11 M8 5.5 H11 M8 7.5 H11" stroke="#777"/></svg>
<div class="a" style="left:721px;top:744px;width:40px;height:17px;background:#c6c6c6"></div>
<svg class="a" style="left:734px;top:743px;" width="14" height="13" viewBox="0 0 14 13"><rect x="0.5" y="0.5" width="13" height="12" fill="none" stroke="#666"/><path d="M3 3.5 H11 M3 5.5 H11 M3 7.5 H11 M3 9.5 H11" stroke="#666"/></svg>
<svg class="a" style="left:774px;top:743px;" width="15" height="14" viewBox="0 0 15 14"><rect x="0.5" y="0.5" width="10" height="10" fill="none" stroke="#777"/><path d="M2 3 H9 M2 5 H6 M2 7 H6" stroke="#777"/><circle cx="10.5" cy="9.5" r="4" fill="#f3f3f3" stroke="#777"/><path d="M6.5 9.5 H14.5 M10.5 5.5 V13.5" stroke="#777" stroke-width="0.8"/></svg>
<div class="a" style="left:808px;top:749px;width:7px;height:1.2px;background:#555"></div>
<div class="a" style="left:820px;top:749px;width:100px;height:1px;background:#a0a0a0"></div>
<div class="a" style="left:868px;top:743px;width:5px;height:13px;background:#555"></div>
<div class="a" style="left:924.5px;top:749px;width:8px;height:1.2px;background:#555"></div>
<div class="a" style="left:928px;top:745px;width:1.2px;height:8px;background:#555"></div>
<div id="t95b9be9466" class="t" style="left:946.60px;top:744.23px;font-size:11.5px;color:#444;transform:scaleX(0.8886);">100%</div>
<div class="a" style="left:433px;top:158px;width:526px;height:587px;background:#fff;box-shadow:0 0 10px 2px rgba(0,0,0,0.28)"></div>
<svg class="a" style="left:435px;top:165px;" width="16" height="16" viewBox="0 0 16 16"><rect x="0.5" y="0.5" width="15" height="15" fill="#d6e2ee" stroke="#0e3570" stroke-width="1.3"/><rect x="1" y="8" width="14" height="1.3" fill="#0e3570"/><text x="1.2" y="15" font-size="8.5" font-weight="bold" fill="#0e3570" font-family="Liberation Sans">TX</text><path d="M7 0 H16 V5 Q12 8 9 5 Q6 3 7 0Z" fill="#d0112b"/><text x="8" y="4.6" font-size="4.8" font-weight="bold" fill="#fff" font-family="Liberation Sans">XD</text></svg>
<div class="a" style="left:456px;top:167px;width:1px;height:14px;background:#c8c8c8"></div>
<svg class="a" style="left:463px;top:167px;" width="13" height="12" viewBox="0 0 13 12"><rect x="0.8" y="0.8" width="11.4" height="10.4" fill="none" stroke="#b4b4b4" stroke-width="1.6"/><rect x="3" y="1" width="7" height="4" fill="#b4b4b4"/></svg>
<svg class="a" style="left:485px;top:167px;" width="16" height="12" viewBox="0 0 16 12"><path d="M0.5 2 H5 L6.5 3.5 H13 V11 H0.5Z" fill="#c8a25a"/><path d="M2.5 5.5 H15.5 L13 11 H0.5Z" fill="#ecc77f"/></svg>
<svg class="a" style="left:508px;top:165px;" width="15" height="17" viewBox="0 0 15 17"><path d="M0.8 0.8 H9 L13.8 5.6 V15.8 H0.8Z" fill="#fff" stroke="#333" stroke-width="1.1"/><path d="M9 0.8 V5.6 H13.8" fill="none" stroke="#333" stroke-width="1.1"/></svg>
<svg class="a" style="left:531px;top:166px;" width="15" height="15" viewBox="0 0 15 15"><path d="M4 1.5 L1 5 L5 7.5" fill="none" stroke="#3d7cc9" stroke-width="1.8"/><path d="M1.5 5 Q7 3 11 5.5 Q14 9 10 13.5 L8 14.5" fill="none" stroke="#3d7cc9" stroke-width="2"/></svg>
<svg class="a" style="left:555px;top:166px;" width="15" height="15" viewBox="0 0 15 15"><path d="M11 1.5 L14 5 L10 7.5" fill="none" stroke="#3d7cc9" stroke-width="1.8"/><path d="M13.5 5 Q8 3 4 5.5 Q1 9 5 13.5 L7 14.5" fill="none" stroke="#3d7cc9" stroke-width="2"/></svg>
<svg class="a" style="left:575px;top:165px;" width="18" height="16" viewBox="0 0 18 16"><rect x="4" y="0.8" width="10" height="4" fill="#fff" stroke="#555" stroke-width="1.2"/><rect x="0.5" y="5" width="17" height="7" rx="1" fill="#5a6d80"/><rect x="4" y="9.5" width="10" height="6" fill="#fff" stroke="#555" stroke-width="1.2"/><path d="M6 12 H12 M6 14 H12" stroke="#3d7cc9" stroke-width="0.9"/></svg>
<svg class="a" style="left:597px;top:172px;" width="6" height="4" viewBox="0 0 6 4"><path d="M0 0 H6 L3 3.5Z" fill="#222"/></svg>
<svg class="a" style="left:608px;top:172px;" width="6" height="4" viewBox="0 0 6 4"><path d="M0 0 H6 L3 3.5Z" fill="#222"/></svg>
<div class="a" style="left:620px;top:167px;width:1px;height:14px;background:#c8c8c8"></div>
<div id="t78339f6318" class="t" style="left:631.96px;top:167.25px;font-size:13px;color:#1e1e1e;transform:scaleX(0.9185);">Content Control Form Field.docx...</div>
<svg class="a" style="left:839px;top:173px;" width="11" height="1" viewBox="0 0 11 1"><rect width="11" height="1.1" fill="#222"/></svg>
<svg class="a" style="left:883px;top:168px;" width="11" height="11" viewBox="0 0 11 11"><rect x="0.6" y="0.6" width="9.8" height="9.8" fill="none" stroke="#222" stroke-width="1.2"/></svg>
<svg class="a" style="left:930px;top:168px;" width="11" height="11" viewBox="0 0 11 11"><path d="M0.5 0.5 L10.5 10.5 M10.5 0.5 L0.5 10.5" stroke="#222" stroke-width="1.2"/></svg>
<div class="a" style="left:434px;top:212px;width:524px;height:1px;background:#dcdcdc"></div>
<div class="a" style="left:806px;top:189px;width:79px;height:24px;background:#f3f4f6;border:1px solid #dcdcdc;border-bottom:none"></div>
<div id="t7a64cb4451" class="t" style="left:445.42px;top:195.42px;font-size:12.8px;color:#1e1e1e;transform:scaleX(0.8840);">Page Layout</div>
<div id="tf99a725334" class="t" style="left:533.08px;top:195.42px;font-size:12.8px;color:#1e1e1e;transform:scaleX(0.9281);">Reporting</div>
<div id="te714946085" class="t" style="left:608.50px;top:195.42px;font-size:12.8px;color:#1e1e1e;transform:scaleX(0.9342);">Proofing</div>
<div id="te62cc56790" class="t" style="left:679.80px;top:195.42px;font-size:12.8px;color:#1e1e1e;transform:scaleX(0.8239);">View</div>
<div id="t3e03e57285" class="t" style="left:728.50px;top:195.42px;font-size:12.8px;color:#1e1e1e;transform:scaleX(0.8971);">Permissions</div>
<div id="t0d628e8145" class="t" style="left:814.50px;top:195.42px;font-size:12.8px;color:#1e1e1e;transform:scaleX(0.8961);">Form Fields</div>
<div class="a" style="left:921px;top:194px;width:18px;height:17px;background:#e8e8e8;border:1px solid #adadad"></div>
<div class="a" style="left:938px;top:194px;width:19px;height:17px;background:#e8e8e8;border:1px solid #adadad"></div>
<svg class="a" style="left:927px;top:199px;" width="4" height="7" viewBox="0 0 4 7"><path d="M4 0 V7 L0 3.5Z" fill="#111"/></svg>
<svg class="a" style="left:946px;top:199px;" width="4" height="7" viewBox="0 0 4 7"><path d="M0 0 V7 L4 3.5Z" fill="#111"/></svg>
<div class="a" style="left:434px;top:213px;width:524px;height:96px;background:#f3f4f6"></div>
<div class="a" style="left:434px;top:309px;width:524px;height:1px;background:#d4d4d4"></div>
<div class="a" style="left:519px;top:216px;width:1px;height:90px;background:#dcdddf"></div>
<div class="a" style="left:592px;top:216px;width:1px;height:90px;background:#dcdddf"></div>
<div class="a" style="left:675px;top:216px;width:1px;height:90px;background:#dcdddf"></div>
<div class="a" style="left:759px;top:216px;width:1px;height:90px;background:#dcdddf"></div>
<div class="a" style="left:864px;top:216px;width:1px;height:90px;background:#dcdddf"></div>
<div class="a" style="left:462px;top:219px;width:33px;height:33px;border:1px solid #d2d2d2;background:#f3f4f6"></div>
<div class="a" style="left:540px;top:219px;width:33px;height:33px;border:1px solid #d2d2d2;background:#f3f4f6"></div>
<div class="a" style="left:701px;top:219px;width:33px;height:33px;border:1px solid #d2d2d2;background:#f3f4f6"></div>
<div class="a" style="left:796px;top:219px;width:33px;height:33px;border:1px solid #d2d2d2;background:#f3f4f6"></div>
<svg class="a" style="left:470px;top:228px;" width="16" height="13" viewBox="0 0 16 13"><rect x="0.5" y="3.5" width="9" height="6" fill="none" stroke="#666"/><path d="M9.5 0.5 V12.5 M7 0.5 H12 M7 12.5 H12" stroke="#666"/><path d="M12 3.5 H15.5 V9.5 H12" fill="none" stroke="#666"/></svg>
<svg class="a" style="left:548px;top:228px;" width="16" height="13" viewBox="0 0 16 13"><rect x="0.5" y="3.5" width="9" height="6" fill="#eac27c" stroke="#3d7cc9"/><path d="M9.5 0.5 V12.5 M7 0.5 H12 M7 12.5 H12" stroke="#666"/><path d="M12 3.5 H15.5 V9.5 H12" fill="none" stroke="#3d7cc9"/></svg>
<svg class="a" style="left:709px;top:225px;" width="18" height="17" viewBox="0 0 18 17"><rect x="0" y="0.5" width="17" height="8" fill="#3d7cc9"/><text x="0.8" y="7.2" font-size="7" fill="#fff" font-family="Liberation Sans">NM</text><path d="M2.5 8.5 V15 M14.5 8.5 V15 M2.5 14.5 H14.5" stroke="#555"/><circle cx="2.5" cy="15" r="1" fill="#3d7cc9"/><circle cx="14.5" cy="15" r="1" fill="#3d7cc9"/></svg>
<svg class="a" style="left:805px;top:228px;" width="14" height="13" viewBox="0 0 14 13"><rect x="0.5" y="0.5" width="13" height="12" fill="#fff" stroke="#666"/><path d="M2.5 3.5 H8 M2.5 5.5 H8 M2.5 7.5 H8 M2.5 9.5 H8 M9.5 0.5 V12.5" stroke="#777"/><path d="M10.5 4 L11.5 2.5 L12.5 4 M10.5 9 L11.5 10.5 L12.5 9" fill="none" stroke="#555" stroke-width="0.8"/></svg>
<div id="tea495f4480" class="t" style="left:448.00px;top:256.42px;font-size:12.8px;color:#1e1e1e;transform:scaleX(0.9171);">Insert Form</div>
<div id="t6f568c4594" class="t" style="left:459.08px;top:271.12px;font-size:12.8px;color:#1e1e1e;transform:scaleX(0.8787);">Fields</div>
<svg class="a" style="left:494px;top:276px;" width="6" height="3" viewBox="0 0 6 3"><path d="M0 0 H6 L3 3.2Z" fill="#222"/></svg>
<div id="ta3c4db5304" class="t" style="left:530.08px;top:256.42px;font-size:12.8px;color:#1e1e1e;transform:scaleX(0.9106);">Edit Form</div>
<div id="t6f568c5375" class="t" style="left:537.50px;top:271.12px;font-size:12.8px;color:#1e1e1e;transform:scaleX(0.8787);">Fields</div>
<svg class="a" style="left:573px;top:276px;" width="6" height="3" viewBox="0 0 6 3"><path d="M0 0 H6 L3 3.2Z" fill="#222"/></svg>
<div id="t85c25f6205" class="t" style="left:620.50px;top:256.42px;font-size:12.8px;color:#1e1e1e;transform:scaleX(0.9228);">Form</div>
<div id="td83d476047" class="t" style="left:605.34px;top:271.12px;font-size:12.8px;color:#1e1e1e;transform:scaleX(0.8870);">Validation</div>
<svg class="a" style="left:661px;top:276px;" width="6" height="3" viewBox="0 0 6 3"><path d="M0 0 H6 L3 3.2Z" fill="#222"/></svg>
<div id="t0d628e6864" class="t" style="left:686.08px;top:256.42px;font-size:12.8px;color:#1e1e1e;transform:scaleX(0.8887);">Form Fields</div>
<div id="t4391356864" class="t" style="left:686.08px;top:271.12px;font-size:12.8px;color:#1e1e1e;transform:scaleX(0.8915);">Properties</div>
<svg class="a" style="left:744px;top:276px;" width="6" height="3" viewBox="0 0 6 3"><path d="M0 0 H6 L3 3.2Z" fill="#222"/></svg>
<div id="teda7607823" class="t" style="left:782.46px;top:256.42px;font-size:12.8px;color:#1e1e1e;transform:scaleX(0.9220);">Drop Down</div>
<div id="tb465ef7710" class="t" style="left:771.00px;top:271.12px;font-size:12.8px;color:#1e1e1e;transform:scaleX(0.8925);">List Properties</div>
<svg class="a" style="left:850px;top:276px;" width="6" height="3" viewBox="0 0 6 3"><path d="M0 0 H6 L3 3.2Z" fill="#222"/></svg>
<div class="a" style="left:434px;top:310px;width:524px;height:412px;background:#f3f4f6"></div>
<div class="a" style="left:435px;top:314px;width:15px;height:14px;border:1.3px solid #444;background:#f8f8f8"></div>
<svg class="a" style="left:440px;top:318px;" width="6" height="6" viewBox="0 0 6 6"><path d="M1 0 V5 H6" fill="none" stroke="#444" stroke-width="1.8"/></svg>
<div class="a" style="left:498px;top:314px;width:460px;height:15px;background:#fcfcfc"></div>
<svg class="a" style="left:498px;top:314px;" width="460" height="15" viewBox="0 0 460 15"><rect x="12" y="10" width="1" height="2" fill="#555"/><rect x="24" y="10" width="1" height="2" fill="#555"/><rect x="36" y="10" width="1" height="2" fill="#555"/><rect x="48" y="8" width="1" height="6" fill="#555"/><rect x="60" y="10" width="1" height="2" fill="#555"/><rect x="72" y="10" width="1" height="2" fill="#555"/><rect x="84" y="10" width="1" height="2" fill="#555"/><rect x="108" y="10" width="1" height="2" fill="#555"/><rect x="120" y="10" width="1" height="2" fill="#555"/><rect x="132" y="10" width="1" height="2" fill="#555"/><rect x="144" y="8" width="1" height="6" fill="#555"/><rect x="156" y="10" width="1" height="2" fill="#555"/><rect x="168" y="10" width="1" height="2" fill="#555"/><rect x="180" y="10" width="1" height="2" fill="#555"/><rect x="192" y="3" width="1" height="9" fill="#555"/><rect x="204" y="10" width="1" height="2" fill="#555"/><rect x="216" y="10" width="1" height="2" fill="#555"/><rect x="228" y="10" width="1" height="2" fill="#555"/><rect x="240" y="8" width="1" height="6" fill="#555"/><rect x="252" y="10" width="1" height="2" fill="#555"/><rect x="264" y="10" width="1" height="2" fill="#555"/><rect x="276" y="10" width="1" height="2" fill="#555"/><rect x="288" y="3" width="1" height="9" fill="#555"/><rect x="300" y="10" width="1" height="2" fill="#555"/><rect x="312" y="10" width="1" height="2" fill="#555"/><rect x="324" y="10" width="1" height="2" fill="#555"/><rect x="336" y="8" width="1" height="6" fill="#555"/><rect x="348" y="10" width="1" height="2" fill="#555"/><rect x="360" y="10" width="1" height="2" fill="#555"/><rect x="372" y="10" width="1" height="2" fill="#555"/><rect x="384" y="3" width="1" height="9" fill="#555"/><rect x="396" y="10" width="1" height="2" fill="#555"/><rect x="408" y="10" width="1" height="2" fill="#555"/><rect x="420" y="10" width="1" height="2" fill="#555"/><rect x="432" y="8" width="1" height="6" fill="#555"/><rect x="444" y="10" width="1" height="2" fill="#555"/><rect x="456" y="10" width="1" height="2" fill="#555"/><rect x="0" y="4" width="1" height="8" fill="#555"/></svg>
<div id="te731665015" class="t" style="left:501.50px;top:314.27px;font-size:8.5px;color:#555;transform:scaleX(0.8449);">1</div>
<div id="te731666915" class="t" style="left:691.50px;top:314.27px;font-size:8.5px;color:#555;">1</div>
<div id="td60b4d7875" class="t" style="left:787.50px;top:314.27px;font-size:8.5px;color:#555;">2</div>
<div id="t6e73bd8835" class="t" style="left:883.50px;top:314.27px;font-size:8.5px;color:#555;">3</div>
<svg class="a" style="left:641.5px;top:327px;" width="6" height="6" viewBox="0 0 6 6"><path d="M1 0 V4.5 H6" fill="none" stroke="#444" stroke-width="1.8"/></svg>
<svg class="a" style="left:689.5px;top:327px;" width="6" height="6" viewBox="0 0 6 6"><path d="M1 0 V4.5 H6" fill="none" stroke="#444" stroke-width="1.8"/></svg>
<svg class="a" style="left:737.5px;top:327px;" width="6" height="6" viewBox="0 0 6 6"><path d="M1 0 V4.5 H6" fill="none" stroke="#444" stroke-width="1.8"/></svg>
<svg class="a" style="left:785.5px;top:327px;" width="6" height="6" viewBox="0 0 6 6"><path d="M1 0 V4.5 H6" fill="none" stroke="#444" stroke-width="1.8"/></svg>
<svg class="a" style="left:833.5px;top:327px;" width="6" height="6" viewBox="0 0 6 6"><path d="M1 0 V4.5 H6" fill="none" stroke="#444" stroke-width="1.8"/></svg>
<svg class="a" style="left:881.5px;top:327px;" width="6" height="6" viewBox="0 0 6 6"><path d="M1 0 V4.5 H6" fill="none" stroke="#444" stroke-width="1.8"/></svg>
<svg class="a" style="left:929.5px;top:327px;" width="6" height="6" viewBox="0 0 6 6"><path d="M1 0 V4.5 H6" fill="none" stroke="#444" stroke-width="1.8"/></svg>
<svg class="a" style="left:594px;top:316px;" width="6" height="11" viewBox="0 0 6 11"><path d="M0 0 L6 5.5 L0 11Z" fill="#555"/></svg>
<svg class="a" style="left:583px;top:329px;" width="11" height="6" viewBox="0 0 11 6"><path d="M0 3 H9 M6.5 0.8 L9 3 L6.5 5.2 M10 0 V6" fill="none" stroke="#444" stroke-width="1.2"/></svg>
<div class="a" style="left:459px;top:335px;width:482px;height:1px;background:#cfcfcf"></div>
<div class="a" style="left:459px;top:335px;width:1px;height:370px;background:#cfcfcf"></div>
<div class="a" style="left:497px;top:373px;width:444px;height:332px;background:#fff;border-left:1.5px solid #000;border-top:1.5px solid #000"></div>
<div class="a" style="left:438px;top:374px;width:15px;height:346px;background:#fcfcfc"></div>
<div class="a" style="left:438px;top:374px;width:15px;height:95px;background:#f1f2f4"></div>
<svg class="a" style="left:438px;top:374px;" width="15" height="346" viewBox="0 0 15 346"><rect x="10" y="12" width="2" height="1" fill="#555"/><rect x="10" y="24" width="2" height="1" fill="#555"/><rect x="10" y="36" width="2" height="1" fill="#555"/><rect x="8" y="48" width="4" height="1" fill="#555"/><rect x="10" y="60" width="2" height="1" fill="#555"/><rect x="10" y="72" width="2" height="1" fill="#555"/><rect x="10" y="84" width="2" height="1" fill="#555"/><rect x="7" y="96" width="5" height="1" fill="#555"/><rect x="10" y="96" width="1" height="4" fill="#555"/><rect x="10" y="108" width="2" height="1" fill="#555"/><rect x="10" y="120" width="2" height="1" fill="#555"/><rect x="10" y="132" width="2" height="1" fill="#555"/><rect x="8" y="144" width="4" height="1" fill="#555"/><rect x="10" y="156" width="2" height="1" fill="#555"/><rect x="10" y="168" width="2" height="1" fill="#555"/><rect x="10" y="180" width="2" height="1" fill="#555"/><rect x="7" y="192" width="5" height="1" fill="#555"/><rect x="10" y="192" width="1" height="4" fill="#555"/><rect x="10" y="204" width="2" height="1" fill="#555"/><rect x="10" y="216" width="2" height="1" fill="#555"/><rect x="10" y="228" width="2" height="1" fill="#555"/><rect x="8" y="240" width="4" height="1" fill="#555"/><rect x="10" y="252" width="2" height="1" fill="#555"/><rect x="10" y="264" width="2" height="1" fill="#555"/><rect x="10" y="276" width="2" height="1" fill="#555"/><rect x="7" y="288" width="5" height="1" fill="#555"/><rect x="10" y="288" width="1" height="4" fill="#555"/><rect x="10" y="300" width="2" height="1" fill="#555"/><rect x="10" y="312" width="2" height="1" fill="#555"/><rect x="10" y="324" width="2" height="1" fill="#555"/><rect x="8" y="336" width="4" height="1" fill="#555"/><rect x="2" y="1" width="10" height="1" fill="#555"/></svg>
<div class="a" style="left:438px;top:564px;width:8px;height:10px;font-size:8.5px;line-height:10px;text-align:center;color:#555;transform:rotate(-90deg)">1</div>
<div class="a" style="left:438px;top:660px;width:8px;height:10px;font-size:8.5px;line-height:10px;text-align:center;color:#555;transform:rotate(-90deg)">2</div>
<svg class="a" style="left:453px;top:460px;" width="6" height="10" viewBox="0 0 6 10"><path d="M3 0 V8.5 M0.5 5.5 L3 8.5 L5.5 5.5 M0 9.5 H6" fill="none" stroke="#444" stroke-width="1.3"/></svg>
<div class="a" style="left:594px;top:470px;width:162px;height:17px;background:#c4c4ff"></div>
<div id="t06d3265941" class="t" style="left:594.42px;top:471.85px;font-size:13px;color:#0a0a30;transform:scaleX(1.0302);">Content Control Form Field</div>
<div class="a" style="left:594px;top:500px;width:15px;height:17px;background:#c4c4ff"></div>
<div class="a" style="left:596px;top:503px;width:11px;height:11px;border:1.4px solid #0a0a30"></div>
<div class="a" style="left:594px;top:530px;width:37px;height:17px;background:#c4c4ff"></div>
<div class="a" style="left:594px;top:585px;width:62px;height:24px;background:#fff;border:1px solid #0078d7"></div>
<div class="a" style="left:639px;top:585px;width:17px;height:24px;background:#cce4f7;border:1px solid #005499"></div>
<svg class="a" style="left:643px;top:595px;" width="8" height="5" viewBox="0 0 8 5"><path d="M0.5 0.5 L4 4 L7.5 0.5" fill="none" stroke="#333" stroke-width="1"/></svg>
<div class="a" style="left:594px;top:609px;width:100px;height:56px;background:#fff;border:1px solid #0078d7;box-shadow:2px 2px 2px rgba(0,0,0,0.35)"></div>
<div class="a" style="left:595px;top:628px;width:98px;height:17.5px;background:#0078d7"></div>
<div id="t72efd05966" class="t" style="left:596.60px;top:615.02px;font-size:12.8px;color:#111;transform:scaleX(1.0295);">Test1</div>
<div id="t69dd825966" class="t" style="left:596.60px;top:632.82px;font-size:12.8px;color:#fff;transform:scaleX(1.0295);">Test2</div>
<div id="tac936c5966" class="t" style="left:596.60px;top:650.82px;font-size:12.8px;color:#111;transform:scaleX(1.0295);">Test3</div>
<div class="a" style="left:941px;top:336px;width:16px;height:369px;background:#f0f0f0"></div>
<div class="a" style="left:941px;top:353px;width:15px;height:109px;background:#cdcdcd"></div>
<svg class="a" style="left:945px;top:342px;" width="8" height="6" viewBox="0 0 8 6"><path d="M0.8 5.2 L4 1.5 L7.2 5.2" fill="none" stroke="#555" stroke-width="2"/></svg>
<svg class="a" style="left:945px;top:693px;" width="8" height="6" viewBox="0 0 8 6"><path d="M0.8 0.8 L4 4.5 L7.2 0.8" fill="none" stroke="#555" stroke-width="2"/></svg>
<div class="a" style="left:460px;top:705px;width:481px;height:16px;background:#f0f0f0"></div>
<div class="a" style="left:477px;top:705px;width:240px;height:16px;background:#cdcdcd"></div>
<div class="a" style="left:940px;top:704px;width:17px;height:17px;background:#cdcdcd"></div>
<svg class="a" style="left:465px;top:709px;" width="7" height="8" viewBox="0 0 7 8"><path d="M5.5 0.8 L1.5 4 L5.5 7.2" fill="none" stroke="#555" stroke-width="2"/></svg>
<svg class="a" style="left:928px;top:709px;" width="7" height="8" viewBox="0 0 7 8"><path d="M1.5 0.8 L5.5 4 L1.5 7.2" fill="none" stroke="#555" stroke-width="2"/></svg>
<div class="a" style="left:434px;top:722px;width:524px;height:22px;background:#2b579a"></div>
<div class="a" style="left:528px;top:724px;width:1px;height:18px;background:#fff"></div>
<div class="a" style="left:606px;top:724px;width:1px;height:18px;background:#fff"></div>
<div class="a" style="left:668px;top:724px;width:1px;height:18px;background:#fff"></div>
<div class="a" style="left:745px;top:724px;width:1px;height:18px;background:#fff"></div>
<div class="a" style="left:870px;top:724px;width:1px;height:18px;background:#fff"></div>
<div class="a" style="left:911px;top:724px;width:1px;height:18px;background:#fff"></div>
<div id="tafcf174543" class="t" style="left:454.46px;top:726.75px;font-size:12.3px;color:#fff;transform:scaleX(0.8779);">Section: 1/1</div>
<div id="t93ff055432" class="t" style="left:543.04px;top:726.75px;font-size:12.3px;color:#fff;transform:scaleX(0.8930);">Page: 1/1</div>
<div id="t85f88a6152" class="t" style="left:615.04px;top:726.75px;font-size:12.3px;color:#fff;transform:scaleX(0.8545);">Line: 5</div>
<div id="ta8b7596761" class="t" style="left:676.42px;top:726.75px;font-size:12.3px;color:#fff;transform:scaleX(0.8477);">Column: 0</div>
<div id="t7fb8de7541" class="t" style="left:754.42px;top:726.75px;font-size:12.3px;color:#fff;transform:scaleX(0.8471);">English (United States)</div>
</body></html>
